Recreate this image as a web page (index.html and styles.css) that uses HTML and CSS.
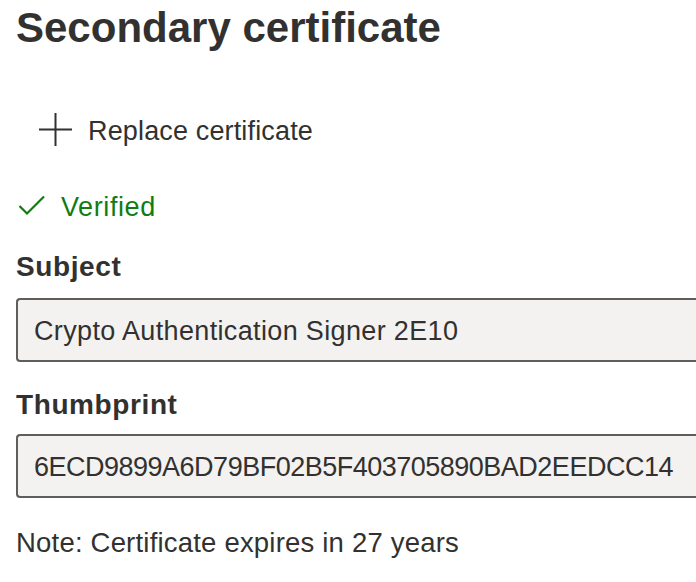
FILE: index.html
```html
<!DOCTYPE html>
<html lang="en">
<head>
<meta charset="utf-8">
<title>Secondary certificate</title>
<link rel="stylesheet" href="styles.css">
</head>
<body>
<main class="page">
  <h1 class="title">Secondary certificate</h1>
  <div class="action">
    <svg class="plus-icon" width="34" height="40" viewBox="0 0 34 40" aria-hidden="true">
      <path d="M0 18.5H33M16.5 2V35" stroke="#323130" stroke-width="2" fill="none"/>
    </svg>
    <span class="action-text">Replace certificate</span>
  </div>
  <div class="status">
    <svg class="check-icon" width="28" height="40" viewBox="0 0 28 40" aria-hidden="true">
      <path d="M1.5 19L9 26.5L26 9.5" stroke="#107c10" stroke-width="2.2" fill="none"/>
    </svg>
    <span class="status-text">Verified</span>
  </div>
  <div class="label label-first">Subject</div>
  <div class="field field-first">Crypto Authentication Signer 2E10</div>
  <div class="label label-second">Thumbprint</div>
  <div class="field field-second">6ECD9899A6D79BF02B5F403705890BAD2EEDCC14</div>
  <p class="note">Note: Certificate expires in 27 years</p>
</main>
</body>
</html>
```
FILE: styles.css
```css
html, body {
  margin: 0;
  padding: 0;
  background: #ffffff;
  overflow: hidden;
}

body {
  width: 696px;
  height: 582px;
  font-family: "Liberation Sans", Arial, sans-serif;
  color: #323130;
}

.page {
  display: flex;
  flex-direction: column;
  align-items: flex-start;
  padding: 0 0 0 16px;
}

.title {
  margin: 3px 0 0;
  font-size: 42px;
  line-height: 50px;
  font-weight: 700;
  letter-spacing: 0;
  color: #323130;
}

.action {
  margin-top: 58px;
  height: 40px;
  display: flex;
  align-items: center;
  gap: 15px;
  padding-left: 23px;
}

.action-text {
  font-size: 27px;
  line-height: 40px;
  letter-spacing: 0.15px;
  color: #323130;
}

.status {
  margin-top: 36px;
  height: 40px;
  display: flex;
  align-items: center;
  gap: 15px;
  padding-left: 2px;
}

.status-text {
  font-size: 27px;
  line-height: 40px;
  letter-spacing: 0.6px;
  color: #107c10;
}

.label {
  font-size: 28px;
  line-height: 36px;
  font-weight: 700;
  letter-spacing: 0.6px;
  color: #323130;
}

.label-first {
  margin-top: 22px;
}

.label-second {
  margin-top: 25px;
}

.field {
  box-sizing: border-box;
  width: 680px;
  height: 64px;
  border: 2px solid #605e5c;
  border-right: none;
  border-radius: 4px 0 0 4px;
  background: #f3f2f1;
  padding: 2px 0 0 16px;
  font-size: 27px;
  line-height: 58px;
  color: #323130;
  white-space: nowrap;
  overflow: hidden;
}

.field-first {
  margin-top: 13px;
  letter-spacing: 0.35px;
}

.field-second {
  margin-top: 11px;
  letter-spacing: -0.5px;
}

.note {
  margin: 27px 0 0;
  font-size: 27.5px;
  line-height: 36px;
  letter-spacing: 0.2px;
  color: #323130;
}
```
